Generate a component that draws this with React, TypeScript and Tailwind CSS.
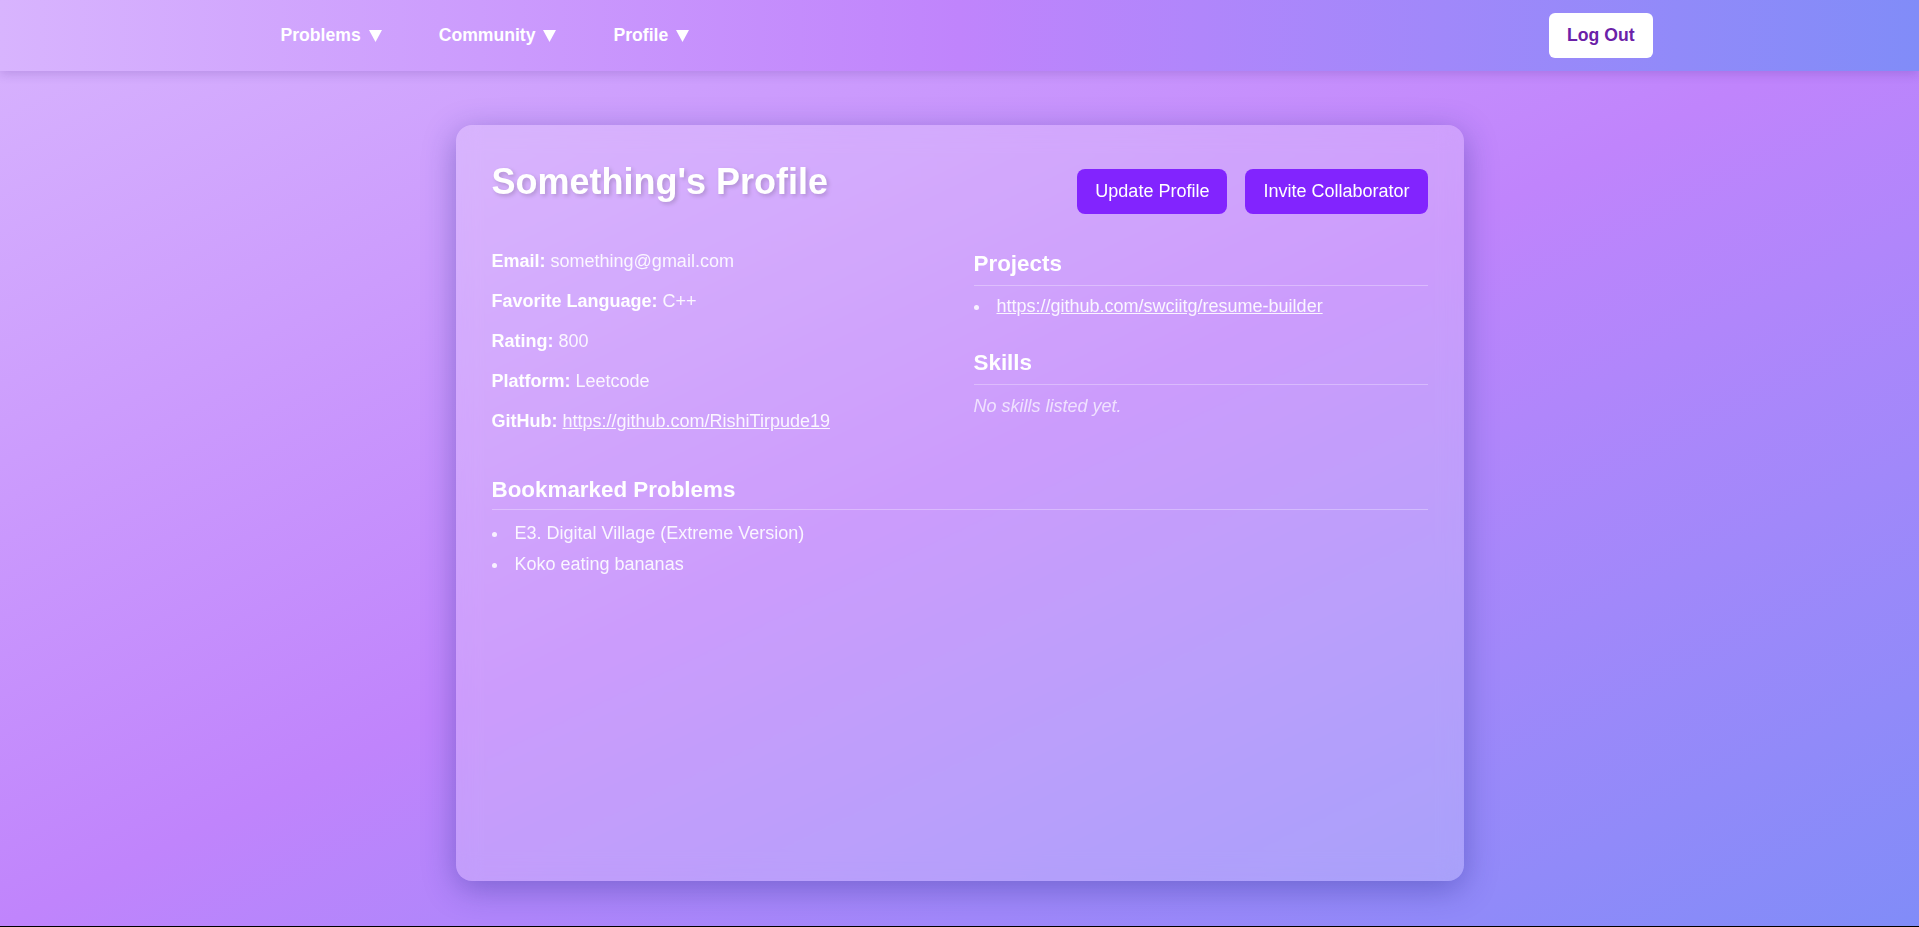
import React from 'react';

const Bullet = () => (
  <span className="mt-[8.5px] h-[5px] w-[5px] shrink-0 rounded-full bg-white/85" />
);

const Caret = () => (
  <svg className="ml-2 shrink-0" width="13" height="12" viewBox="0 0 13 12">
    <polygon points="0,0 13,0 6.5,12" fill="white" />
  </svg>
);

const App = () => {
  const navItems = ['Problems', 'Community', 'Profile'];

  const details = [
    { label: 'Email:', value: 'something@gmail.com' },
    { label: 'Favorite Language:', value: 'C++' },
    { label: 'Rating:', value: '800' },
    { label: 'Platform:', value: 'Leetcode' },
  ];

  const bookmarks = ['E3. Digital Village (Extreme Version)', 'Koko eating bananas'];

  return (
    <div className="h-screen bg-black font-['Liberation_Sans',Arial,sans-serif]">
      <div className="flex h-[926px] flex-col bg-linear-to-br/srgb from-[#d8b4fe] via-[#c084fc] to-[#818cf8]">
        {/* Navbar */}
        <nav className="h-[71px] shrink-0 bg-linear-to-r/srgb from-[#d8b4fe] via-[#c084fc] to-[#818cf8] shadow-[0_3px_10px_rgba(60,20,120,0.18)]">
          <div className="mx-auto flex h-full w-[1390px] items-center justify-between">
            <ul className="flex items-center gap-[25px]">
              {navItems.map((item) => (
                <li key={item} className="flex items-center px-4 text-[17.6px] font-bold leading-[21px] text-white">
                  {item}
                  <Caret />
                </li>
              ))}
            </ul>
            <button className="mr-[2px] rounded-md bg-white px-[18px] py-3 text-[17.6px] font-bold leading-[21px] text-[#6b21a8]">
              Log Out
            </button>
          </div>
        </nav>

        {/* Profile card */}
        <div className="mx-auto mt-[54px] h-[756px] w-[1008px] rounded-2xl bg-white/20 p-9 shadow-[0_8px_32px_0_rgba(31,38,135,0.37)] backdrop-blur-md">
          <div className="flex items-start justify-between">
            <h1 className="text-[36px] font-bold leading-[41px] text-white [text-shadow:2px_2px_4px_rgba(0,0,0,0.18)]">
              Something's Profile
            </h1>
            <div className="flex gap-[18px] pt-2">
              <button className="rounded-lg bg-[#8224fe] px-[18px] py-3 text-[18px] leading-[21px] text-white">
                Update Profile
              </button>
              <button className="rounded-lg bg-[#8224fe] px-[18px] py-3 text-[18px] leading-[21px] text-white">
                Invite Collaborator
              </button>
            </div>
          </div>

          <div className="mt-[37px] grid grid-cols-2 gap-7">
            {/* left column */}
            <div className="flex flex-col gap-[19px] text-[18px] leading-[21px] text-white/90">
              {details.map((d) => (
                <p key={d.label}>
                  <span className="font-bold text-white">{d.label}</span> {d.value}
                </p>
              ))}
              <p>
                <span className="font-bold text-white">GitHub:</span>{' '}
                <a className="underline">https://github.com/RishiTirpude19</a>
              </p>
            </div>

            {/* right column */}
            <div>
              <h3 className="border-b border-white/30 pb-[9px] text-[22.4px] font-bold leading-[25px] text-white">
                Projects
              </h3>
              <ul className="mt-[10px]">
                <li className="flex items-start gap-[18px] text-[18px] leading-[21px] text-white/90">
                  <Bullet />
                  <a className="underline">https://github.com/swciitg/resume-builder</a>
                </li>
              </ul>

              <h3 className="mt-[33px] border-b border-white/30 pb-[9px] text-[22.4px] font-bold leading-[25px] text-white">
                Skills
              </h3>
              <p className="mt-[11px] text-[18px] italic leading-[21px] text-white/70">No skills listed yet.</p>
            </div>
          </div>

          {/* bookmarks */}
          <h3 className="mt-[45px] border-b border-white/30 pb-[7px] text-[22.4px] font-bold leading-[25px] text-white">
            Bookmarked Problems
          </h3>
          <ul className="mt-[13px] flex flex-col gap-[10px]">
            {bookmarks.map((b) => (
              <li key={b} className="flex items-start gap-[18px] text-[18px] leading-[21px] text-white/90">
                <Bullet />
                <span>{b}</span>
              </li>
            ))}
          </ul>
        </div>
      </div>
    </div>
  );
};

export default App;
